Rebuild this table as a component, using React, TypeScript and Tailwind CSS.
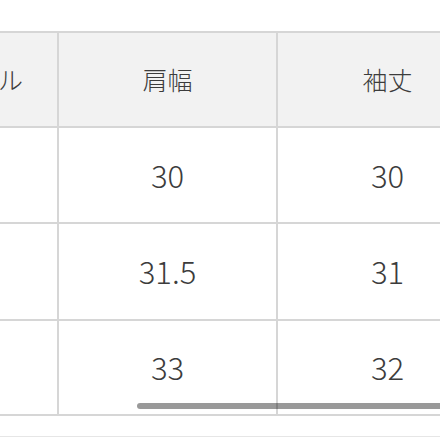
const FONT = '"Noto Sans CJK JP", "Noto Sans", sans-serif'

const HEAD = ['トータル', '肩幅', '袖丈']
const ROWS = [
  ['', '30', '30'],
  ['', '31.5', '31'],
  ['', '33', '32'],
]
const HEIGHTS = ['h-[96px]', 'h-[97px]', 'h-[95px]']

const COLS = 'grid grid-cols-[170px_219px_219px]'

export default function App() {
  return (
    <div className="w-[440px] h-[440px] bg-white overflow-hidden relative" style={{ fontFamily: FONT }}>
      <div className="h-[31px]" />
      <div className="ml-[-111px] w-max border-t-2 border-[#d6d6d6]">
        <div className={`${COLS} h-[95px] bg-[#f2f2f2] border-b-2 border-[#d6d6d6]`}>
          {HEAD.map((h, i) => (
            <div key={h}
              className={`flex items-center justify-center text-[25px] font-light text-[#3c3c3c] ${i < 2 ? 'border-r-2 border-[#d6d6d6]' : ''}`}>
              {h}
            </div>
          ))}
        </div>
        {ROWS.map((r, ri) => (
          <div key={ri}
            className={`${COLS} ${HEIGHTS[ri]} border-b-2 border-[#d6d6d6]`}>
            {r.map((v, i) => (
              <div key={i}
                className={`flex items-center justify-center text-[31px] font-light text-[#3c3c3c] ${i < 2 ? 'border-r-2 border-[#d6d6d6]' : ''}`}>
                {v}
              </div>
            ))}
          </div>
        ))}
      </div>
      <div className="h-[21px] border-b border-[#e6e6e6]" />

      {/* 가로 스크롤바 */}
      <div className="absolute left-[137px] top-[403px] w-[320px] h-[6px] rounded-full bg-black/40" />
    </div>
  )
}
